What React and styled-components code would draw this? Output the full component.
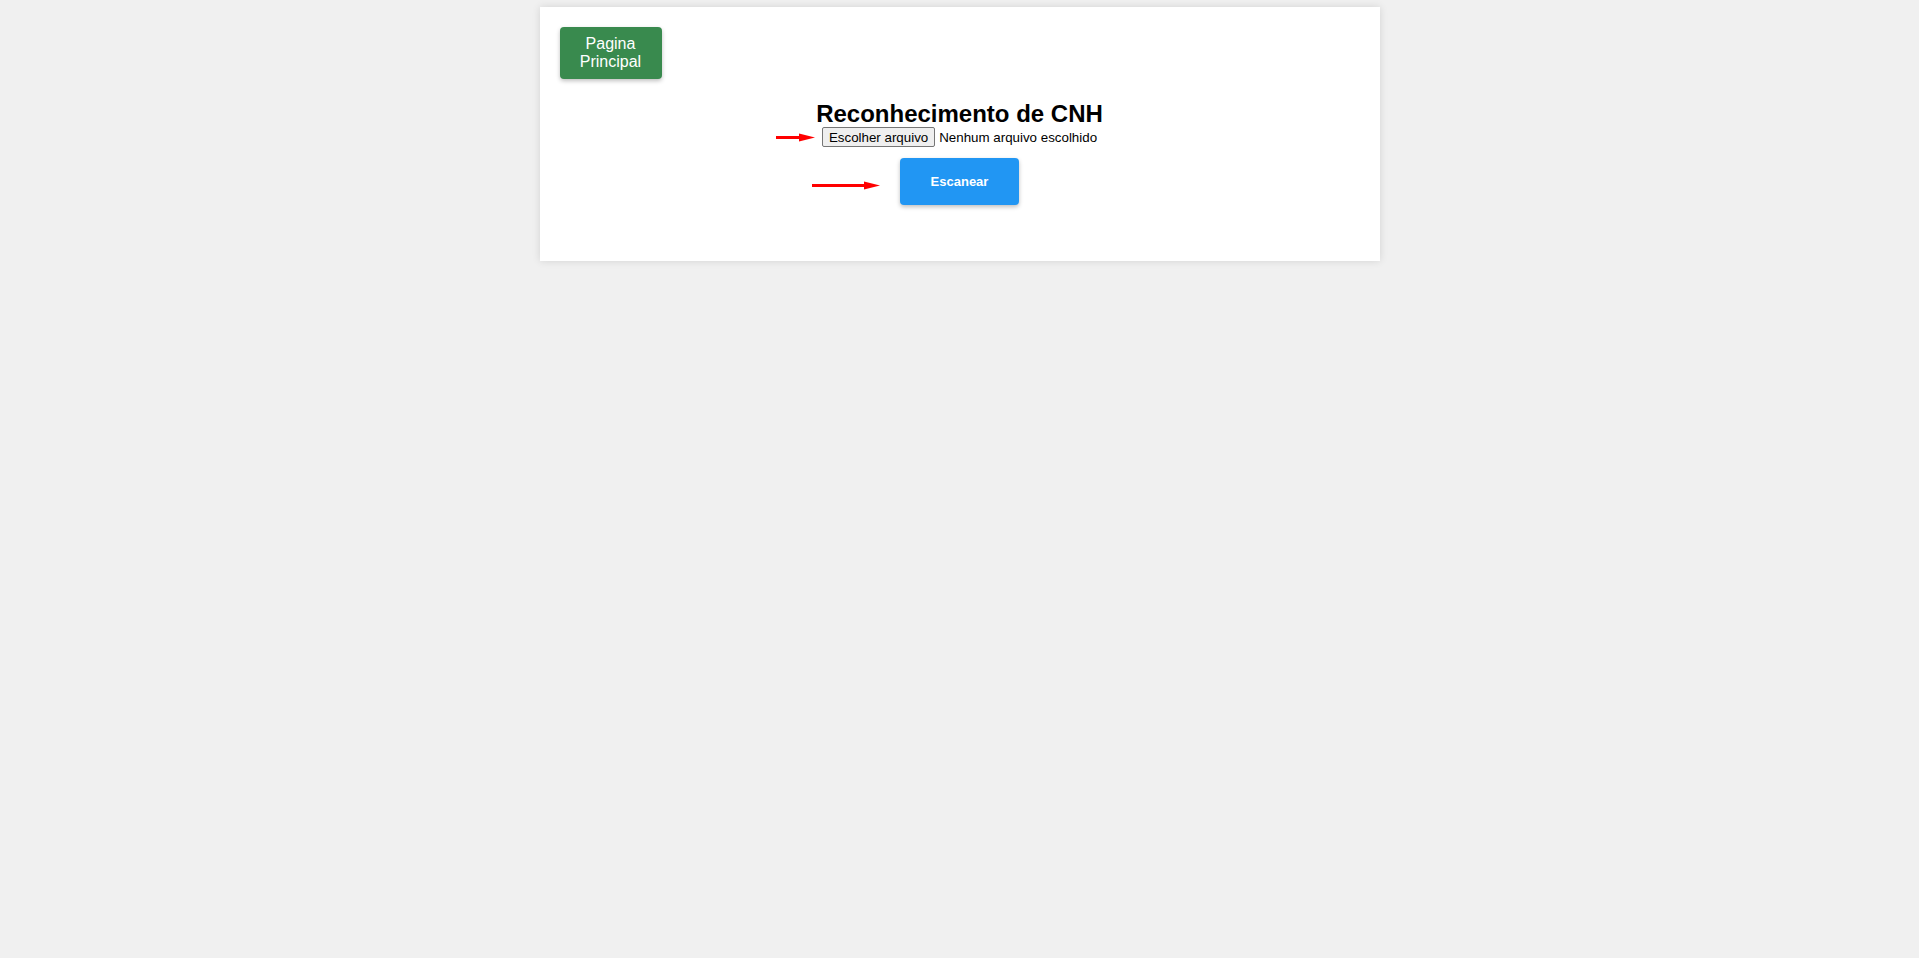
import React from "react";
import styled, { createGlobalStyle } from "styled-components";

const GlobalStyle = createGlobalStyle`
  html, body {
    margin: 0;
    padding: 0;
    background: #f0f0f0;
    font-family: "Liberation Sans", Arial, sans-serif;
  }
`;

export default function App() {
  return (
    <>
      <GlobalStyle />
      <Page>
        <Card>
          <HomeButton>Pagina Principal</HomeButton>
          <Content>
            <Title>Reconhecimento de CNH</Title>
            <FileRow>
              <Arrow width={39} gap={7} dy={1} />
              <FileButton>
                Escolher arquivo
                <HiddenInput type="file" />
              </FileButton>
              <FileName>Nenhum arquivo escolhido</FileName>
            </FileRow>
            <ScanWrap>
              <Arrow width={68} gap={20} dy={4} />
              <ScanButton>Escanear</ScanButton>
            </ScanWrap>
          </Content>
        </Card>
      </Page>
    </>
  );
}

function Arrow({ width, gap, dy = 0 }) {
  return (
    <ArrowSvg
      $gap={gap}
      $dy={dy}
      width={width}
      height="9"
      viewBox={`0 0 ${width} 9`}
    >
      <rect x="0" y="3" width={width - 14} height="3" fill="#ff0000" />
      <polygon
        points={`${width - 16},0.5 ${width},4.5 ${width - 16},8.5`}
        fill="#ff0000"
      />
    </ArrowSvg>
  );
}

const Page = styled.div`
  padding-top: 7px;
  min-height: 951px;
  display: flex;
  justify-content: center;
  align-items: flex-start;
`;

const Card = styled.div`
  width: 840px;
  height: 254px;
  box-sizing: border-box;
  padding: 20px;
  background: #ffffff;
  box-shadow: 0 0 8px rgba(0, 0, 0, 0.12);
  display: flex;
  flex-direction: column;
  align-items: flex-start;
`;

const HomeButton = styled.button`
  width: 102px;
  height: 52px;
  padding: 0 8px;
  border: none;
  border-radius: 4px;
  background: #398a4e;
  color: #ffffff;
  font-family: "Liberation Sans", Arial, sans-serif;
  font-size: 16px;
  line-height: 18px;
  text-align: center;
  box-shadow: 0 2px 4px rgba(0, 0, 0, 0.25);
  cursor: pointer;
`;

const Content = styled.div`
  align-self: stretch;
  display: flex;
  flex-direction: column;
  align-items: center;
  margin-top: 21px;
`;

const Title = styled.h2`
  margin: 0;
  font-size: 24px;
  font-weight: bold;
  color: #000000;
  line-height: 27px;
`;

const FileRow = styled.div`
  position: relative;
  display: flex;
  align-items: center;
  height: 20px;
  font-size: 13.33px;
  color: #000000;
`;

const FileButton = styled.label`
  display: inline-flex;
  align-items: center;
  box-sizing: border-box;
  height: 20px;
  padding: 0 6px;
  margin-right: 4px;
  background: #efefef;
  border: 1px solid #767676;
  border-radius: 2px;
  color: #000000;
  cursor: pointer;
`;

const HiddenInput = styled.input`
  display: none;
`;

const FileName = styled.span`
  white-space: nowrap;
`;

const ScanWrap = styled.div`
  position: relative;
  margin-top: 11px;
`;

const ScanButton = styled.button`
  display: block;
  width: 119px;
  height: 47px;
  border: none;
  border-radius: 4px;
  background: #2196f3;
  color: #ffffff;
  font-family: "Liberation Sans", Arial, sans-serif;
  font-size: 13px;
  font-weight: bold;
  box-shadow: 0 2px 4px rgba(0, 0, 0, 0.25);
  cursor: pointer;
`;

const ArrowSvg = styled.svg`
  position: absolute;
  top: 50%;
  right: calc(100% + ${(p) => p.$gap}px);
  margin-top: ${(p) => p.$dy - 5}px;
  display: block;
`;
